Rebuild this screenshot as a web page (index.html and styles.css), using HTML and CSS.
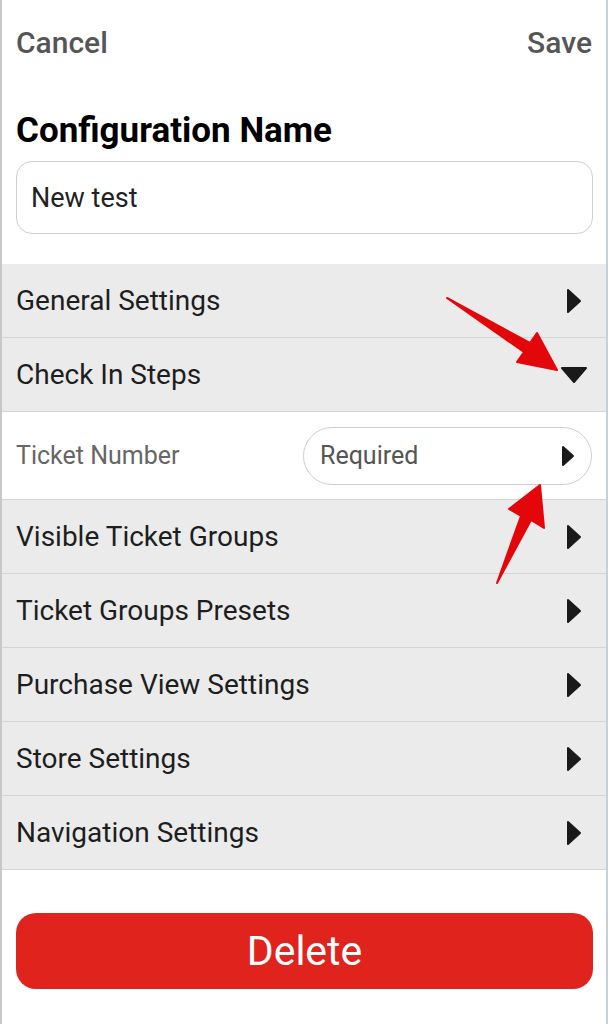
FILE: index.html
```html
<!DOCTYPE html>
<html lang="en">
<head>
<meta charset="utf-8">
<title>Configuration</title>
<link rel="stylesheet" href="styles.css">
</head>
<body>
<div class="page">
  <div class="edge-green"></div>
  <header class="topbar">
    <span class="link">Cancel</span>
    <span class="link">Save</span>
  </header>
  <h1 class="title">Configuration Name</h1>
  <div class="input">New test</div>

  <ul class="list">
    <li class="row">
      <span>General Settings</span>
      <svg class="tri-r" viewBox="0 0 16 26"><path d="M2 2 L14 13 L2 24 Z"/></svg>
    </li>
    <li class="row">
      <span>Check In Steps</span>
      <svg class="tri-d" viewBox="0 0 28 18"><path d="M2 2 L26 2 L14 16 Z"/></svg>
    </li>
    <li class="row sub">
      <span class="sub-label">Ticket Number</span>
      <div class="pill">
        <span>Required</span>
        <svg class="tri-s" viewBox="0 0 14 22"><path d="M2 2 L12 11 L2 20 Z"/></svg>
      </div>
    </li>
    <li class="row">
      <span>Visible Ticket Groups</span>
      <svg class="tri-r" viewBox="0 0 16 26"><path d="M2 2 L14 13 L2 24 Z"/></svg>
    </li>
    <li class="row">
      <span>Ticket Groups Presets</span>
      <svg class="tri-r" viewBox="0 0 16 26"><path d="M2 2 L14 13 L2 24 Z"/></svg>
    </li>
    <li class="row">
      <span>Purchase View Settings</span>
      <svg class="tri-r" viewBox="0 0 16 26"><path d="M2 2 L14 13 L2 24 Z"/></svg>
    </li>
    <li class="row">
      <span>Store Settings</span>
      <svg class="tri-r" viewBox="0 0 16 26"><path d="M2 2 L14 13 L2 24 Z"/></svg>
    </li>
    <li class="row">
      <span>Navigation Settings</span>
      <svg class="tri-r" viewBox="0 0 16 26"><path d="M2 2 L14 13 L2 24 Z"/></svg>
    </li>
  </ul>

  <button class="delete">Delete</button>

  <svg class="arrows" viewBox="0 0 608 1024">
    <polygon points="447,298 530,343 537,333 557,370 517,362 524,352"/>
    <polygon points="497,583 521,516 509,509 540,485 544,528 531,520"/>
  </svg>
</div>
</body>
</html>
```

FILE: styles.css
```css
* { box-sizing: border-box; }
html, body { margin: 0; padding: 0; background: #fff; }
body {
  font-family: Roboto, "Liberation Sans", Arial, sans-serif;
  color: #222;
}
.page {
  position: relative;
  width: 608px;
  height: 1024px;
  border-left: 2px solid #c8c8c8;
  border-right: 2px solid #c9cfd8;
  overflow: hidden;
}
.edge-green {
  position: absolute;
  left: -2px;
  top: 0;
  width: 2px;
  height: 505px;
  background: #4caf50;
}
.topbar {
  display: flex;
  justify-content: space-between;
  padding: 25px 14px 0 14px;
  height: 58px;
}
.link {
  font-size: 30px;
  line-height: 36px;
  font-weight: 500;
  color: #555;
}
.title {
  margin: 52px 0 0 14px;
  font-size: 35px;
  line-height: 42px;
  font-weight: 700;
  color: #000;
}
.input {
  margin: 9px 13px 0 14px;
  height: 73px;
  border: 1.5px solid #cfcfcf;
  border-radius: 16px;
  padding: 0 14px;
  display: flex;
  align-items: center;
  font-size: 27px;
  color: #222;
}
.list {
  list-style: none;
  margin: 30px 0 0 0;
  padding: 0;
}
.row {
  height: 74px;
  background: #ebebeb;
  border-bottom: 1px solid #d4d4d4;
  display: flex;
  align-items: center;
  justify-content: space-between;
  padding: 0 24px 0 14px;
  font-size: 28px;
  color: #1e1e1e;
}
.row.sub {
  height: 88px;
  background: #fff;
  padding: 0 14px 0 14px;
}
.sub-label {
  font-size: 25px;
  color: #666;
}
.pill {
  width: 289px;
  height: 58px;
  border: 1.5px solid #cfcfcf;
  border-radius: 29px;
  display: flex;
  align-items: center;
  justify-content: space-between;
  padding: 0 16px 0 16px;
  font-size: 25px;
  color: #555;
}
.tri-r { width: 16px; height: 26px; }
.tri-r path, .tri-d path, .tri-s path {
  fill: #1a1a1a;
  stroke: #1a1a1a;
  stroke-width: 2;
  stroke-linejoin: round;
}
.tri-d { width: 28px; height: 18px; margin-right: -6px; }
.tri-s { width: 14px; height: 22px; }
.delete {
  display: block;
  margin: 43px 13px 0 14px;
  width: 577px;
  height: 76px;
  border: none;
  border-radius: 20px;
  background: #e0231c;
  color: #fff;
  font-family: Roboto, "Liberation Sans", Arial, sans-serif;
  font-size: 41px;
}
.arrows {
  position: absolute;
  left: -2px;
  top: 0;
  width: 608px;
  height: 1024px;
  pointer-events: none;
}
.arrows polygon {
  fill: #e3060b;
  stroke: #e3060b;
  stroke-width: 2;
  stroke-linejoin: round;
}
```
